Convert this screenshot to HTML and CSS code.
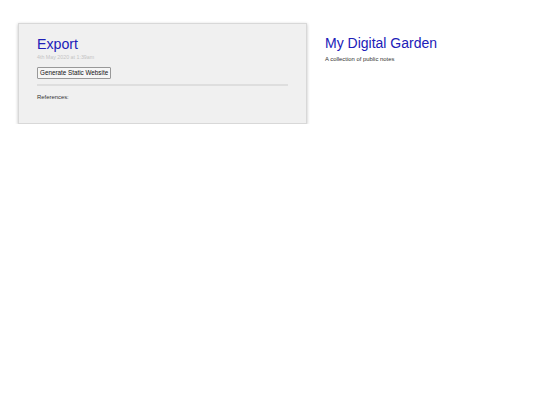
FILE: index.html
```html
<!DOCTYPE html>
<html>
<head>
<meta charset="utf-8">
<link rel="stylesheet" href="styles.css">
</head>
<body>
<div class="page">
  <main class="card">
    <h1 class="title">Export</h1>
    <div class="date">4th May 2020 at 1:39am</div>
    <button class="btn">Generate Static Website</button>
    <hr class="rule">
    <div class="refs">References:</div>
  </main>
  <aside class="side">
    <h2 class="site-title">My Digital Garden</h2>
    <p class="site-desc">A collection of public notes</p>
  </aside>
</div>
</body>
</html>
```

FILE: styles.css
```css
html, body {
  margin: 0;
  padding: 0;
  background: #fff;
  font-family: "Liberation Sans", Arial, sans-serif;
}
.page {
  display: flex;
  align-items: flex-start;
  gap: 18px;
  padding: 23px 0 0 18px;
}
.card {
  box-sizing: border-box;
  width: 289px;
  height: 101px;
  background: #f0f0f0;
  border: 1px solid #d8d8d8;
  box-shadow: 0 1px 3px rgba(0,0,0,0.25);
  padding: 11px 18px 0 18px;
}
.title {
  margin: 0;
  font-size: 14.2px;
  font-weight: normal;
  color: #2020b8;
  line-height: 18px;
}
.date {
  font-size: 5.3px;
  color: #c4c4c4;
  line-height: 7px;
  margin-top: 1px;
}
.btn {
  display: block;
  margin-top: 6px;
  font-family: "Liberation Sans", Arial, sans-serif;
  font-size: 6.3px;
  color: #111;
  background: #f6f6f6;
  border: 1px solid #999;
  border-radius: 1px;
  padding: 1px 2px;
  line-height: 8px;
}
.rule {
  margin: 5px 0 0 0;
  border: 0;
  height: 2px;
  background: #dedede;
}
.refs {
  font-size: 5.9px;
  color: #333;
  margin-top: 7px;
  line-height: 8px;
}
.side {
  padding-top: 11px;
}
.site-title {
  margin: 0;
  font-size: 14px;
  font-weight: normal;
  color: #2020b8;
  line-height: 18px;
}
.site-desc {
  margin: 3px 0 0 0;
  font-size: 5.9px;
  color: #333;
  line-height: 8px;
}
```
